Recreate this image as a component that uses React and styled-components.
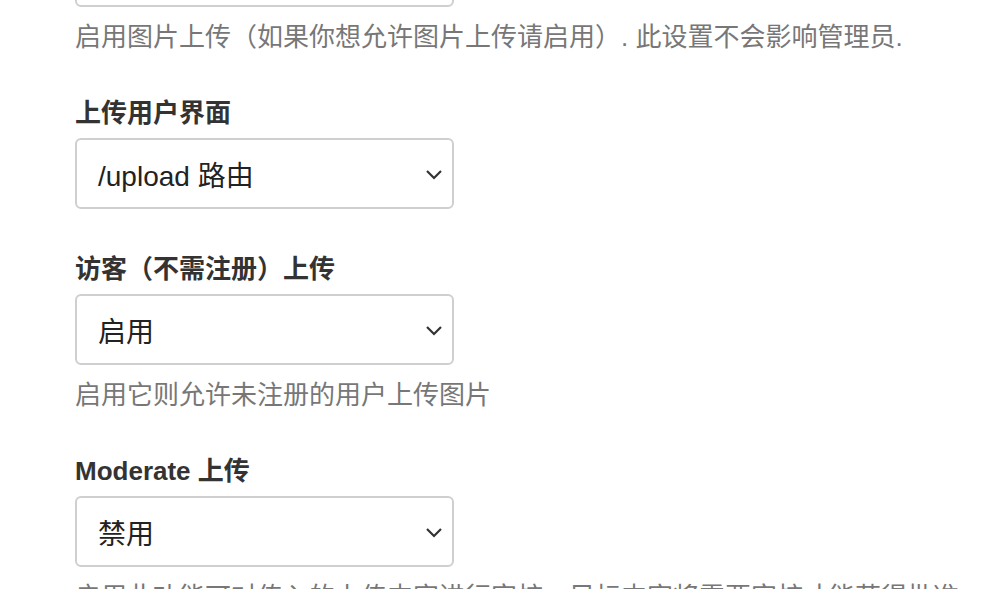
import React from 'react';
import styled, { createGlobalStyle } from 'styled-components';

const GlobalStyle = createGlobalStyle`
  html, body {
    margin: 0;
    padding: 0;
    background: #fff;
    overflow: hidden;
  }
  body {
    font-family: "Liberation Sans", "Noto Sans CJK SC", sans-serif;
    color: #333;
  }
`;

const Page = styled.div`
  width: 991px;
  height: 589px;
  overflow: hidden;
  padding-left: 75px;
  box-sizing: border-box;
`;

const Form = styled.div`
  display: flex;
  flex-direction: column;
  margin-top: -64px;
`;

const FormGroup = styled.div`
  display: flex;
  flex-direction: column;
  margin-bottom: ${p => (p.$hasHint ? '40px' : '42px')};
`;

const Label = styled.label`
  font-size: 26px;
  line-height: 36px;
  font-weight: bold;
  color: #333;
  margin-bottom: 7px;
`;

const SelectBox = styled.div`
  width: 379px;
  height: 71px;
  box-sizing: border-box;
  border: 2px solid #cfcfcf;
  border-radius: 6px;
  display: flex;
  align-items: center;
  justify-content: space-between;
  padding: 0 9px 0 21px;
  font-size: 28px;
  color: #222;
  background: #fff;
`;

const Hint = styled.div`
  margin-top: 12px;
  font-size: 26px;
  line-height: 36px;
  color: #777;
  white-space: nowrap;
`;

const Chevron = () => (
  <svg width="18" height="12" viewBox="0 0 18 12">
    <path d="M2 3 L9 10 L16 3" fill="none" stroke="#333" strokeWidth="2.2" />
  </svg>
);

const fields = [
  {
    value: '',
    hint: '启用图片上传（如果你想允许图片上传请启用）. 此设置不会影响管理员.'
  },
  { label: '上传用户界面', value: '/upload 路由' },
  {
    label: '访客（不需注册）上传',
    value: '启用',
    hint: '启用它则允许未注册的用户上传图片'
  },
  {
    label: 'Moderate 上传',
    value: '禁用',
    hint: '启用此功能可对传入的上传内容进行审核。目标内容将需要审核才能获得批准。'
  }
];

export default function App() {
  return (
    <Page>
      <GlobalStyle />
      <Form>
        {fields.map((f, idx) => (
          <FormGroup key={idx} $hasHint={!!f.hint}>
            {f.label && <Label>{f.label}</Label>}
            <SelectBox>
              <span>{f.value}</span>
              <Chevron />
            </SelectBox>
            {f.hint && <Hint>{f.hint}</Hint>}
          </FormGroup>
        ))}
      </Form>
    </Page>
  );
}
